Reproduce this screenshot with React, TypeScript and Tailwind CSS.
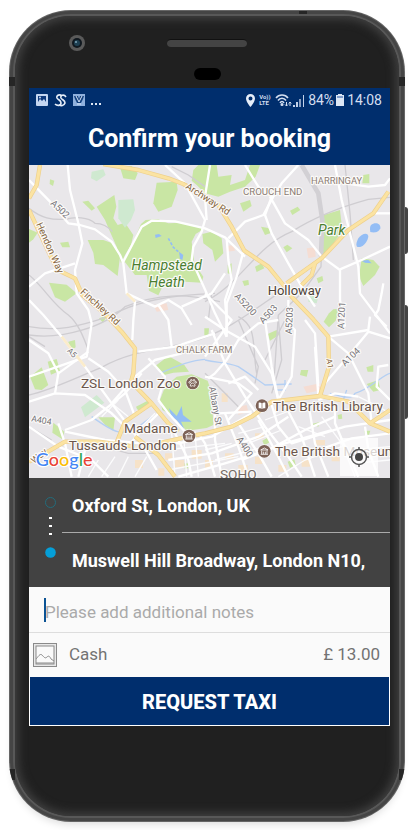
import React from 'react';

const parks = [
  'M285 22L320 18L338 40L330 60L295 55Z',
  'M75 58L88 62L84 78L74 72Z',
  'M395 68L455 65L458 90L440 140L400 155L385 130Z',
  'M505 30L520 15L575 15L580 50L620 45L615 75L660 60L675 15L705 15L692 50L660 80L615 95L580 110L540 100L515 75L500 62Z',
  'M172 125L190 122L210 145L200 152Z',
  'M215 140L268 105L274 140L265 175L278 195L300 188L325 225L318 255L300 285L288 310L275 260L255 215L240 180Z',
  'M348 192L362 180L400 178L430 190L470 188L515 198L540 205L512 222L500 245L508 310L535 350L530 368L480 365L440 365L410 385L400 406L372 392L365 345L330 345L295 300L318 260Z',
  'M188 240L235 240L262 250L285 290L278 348L235 315L210 312L205 278Z',
  'M12 207L38 218L25 238L12 248Z',
  'M105 248L130 245L135 262L112 262Z',
  'M72 368L125 374L155 400L120 425L90 412Z',
  'M532 222L560 215L590 235L595 280L570 305L562 270L535 250Z',
  'M645 130L675 120L680 138L655 155Z',
  'M795 152L818 140L826 150L802 165Z',
  'M708 200L730 204L740 218L720 225Z',
  'M775 262L787 254L802 265L785 277Z',
  'M1015 45L1033 42L1033 70L1012 70Z',
  'M896 165L945 150L952 212L905 280L886 288Z',
  'M1010 295L1045 300L1064 320L1050 345L1015 378L1002 350Z',
  'M690 320L710 310L718 325L695 336Z',
  'M608 316L620 310L620 345L608 340Z',
  'M652 363L670 360L672 374L658 378Z',
  'M875 355L892 348L895 362L880 370Z',
  'M912 460L925 448L942 446L932 482L912 502L896 485Z',
  'M15 650L50 622L70 675L50 690L30 688Z',
  'M68 605L95 597L105 632L78 644Z',
  'M130 545L150 540L152 562L135 573Z',
  'M222 475L248 466L234 488Z',
  'M388 620L430 588L478 615L492 635L445 638L418 645Z',
  'M405 720L420 680L455 650L500 643L548 662L560 700L565 795L545 804L485 812L440 765L412 750Z',
  'M333 740L372 720L384 732L340 755Z',
  'M220 772L270 772L265 812L240 794Z',
  'M85 788L118 815L112 838L82 818Z',
  'M538 505L552 505L550 530L538 526Z',
  'M728 522L755 510L762 525L735 542Z',
  'M828 630L850 630L845 650L825 645Z',
  'M1024 622L1045 615L1045 635L1028 635Z',
  'M1025 672L1060 660L1066 690L1045 695Z',
  'M712 842L730 832L737 845L718 856Z',
  'M788 905L808 898L812 915L795 924Z',
  'M938 765L950 762L952 776L940 778Z',
  'M1018 812L1036 812L1032 824L1020 824Z',
  'M860 792L885 786L880 800Z',
  'M478 910L490 910L490 925L478 925Z',
];

const mintParks = [
  'M200 35L235 28L242 45L215 64L198 55Z',
  'M280 120L325 118L330 150L318 180L300 203L280 175Z',
  'M168 742L215 705L238 728L180 772Z',
  'M850 405L880 410L875 430L850 425Z',
];

const pinkAreas = [
  'M385 435L425 430L430 450L395 455Z',
  'M605 258L625 255L630 272L605 275Z',
  'M845 265L870 262L872 290L850 295Z',
  'M835 680L885 670L890 690L845 700Z',
  'M640 740L665 735L670 755L640 765Z',
];

const railways = [
  'M12 145C50 175 80 180 120 178C150 170 190 170 210 190C235 190 250 200 262 215',
  'M12 345C60 385 80 430 130 465C160 490 175 530 190 570',
  'M12 500C100 515 160 500 250 470C330 425 430 405 570 400',
  'M12 525C110 540 240 500 300 440C400 400 480 400 585 425',
  'M12 705C80 690 160 650 230 622C320 570 430 565 500 545C600 520 700 440 760 400',
  'M540 425C650 370 690 260 800 215C870 170 950 140 1030 118L1095 112',
  'M830 15L880 100L892 180L888 320L830 400L760 465L745 690',
  'M640 480L700 620L690 670M695 640C680 560 700 500 640 470',
  'M560 400L550 480M760 475L770 600L740 700',
  'M12 800L80 840M780 480L720 600M60 560L12 530',
  'M960 15L975 160L985 300M200 850L310 880L400 880',
  'M540 640L600 700L640 740M440 20L490 45L540 80',
];

const streets = [
  'M12 60L75 125L130 190L165 195L210 208L260 245L285 285L295 310L305 400L330 425L325 480L322 540',
  'M128 15L135 90L160 190L172 250L150 330L155 400L190 450L200 490L185 590L12 650',
  'M12 380L60 340L150 310',
  'M12 420L55 465L110 530L180 620L260 730L350 850L395 930',
  'M295 305L350 200L380 182L450 184L540 205L600 232L660 290',
  'M420 15L480 70L540 180L530 215L505 260L500 300L545 400L570 460L605 530',
  'M305 400L390 440L430 420L470 445L500 495',
  'M400 435L430 480L440 560',
  'M470 440L560 400L600 340',
  'M555 15L540 110L545 180',
  'M660 15L700 80L740 110L720 165L740 220L790 310L830 380L870 440',
  'M820 15L770 70L745 110L715 165L660 185L610 235',
  'M735 110L780 190L850 240L890 290L945 330L945 420L960 500',
  'M930 15L950 120L975 220L990 280L1000 320L1005 400L1050 460L1095 520',
  'M945 328L1010 300L1095 260',
  'M960 70L1030 80L1080 75L1095 55',
  'M1040 160L1095 160',
  'M1075 370L1070 400L1060 450L1050 465L1085 500',
  'M605 235L610 300L620 360L600 420L605 480L605 520',
  'M655 275L635 350L605 430L605 530',
  'M540 400L590 450L620 480L540 590',
  'M760 480L700 490L640 540L605 600L570 640L550 655',
  'M560 510L600 610L660 710L720 800L790 890L830 950',
  'M540 470L600 510L690 560L740 640L760 720',
  'M780 480L810 510L800 650L760 720L750 760',
  'M790 420L790 470M720 480L740 620L760 720',
  'M840 480L870 520L880 680M870 560L880 710',
  'M910 530L970 580L1030 700L1040 790',
  'M910 530L1030 510L1035 470',
  'M1095 535L1030 515L960 600L900 670',
  'M1090 615L1060 620L1055 680L1095 720',
  'M740 735L760 800L800 850L960 800L1095 780',
  'M12 540L70 580L100 640L90 700',
  'M12 725L90 700L180 705L260 760L300 800',
  'M100 640L190 575',
  'M260 730L330 650L390 600L470 580',
  'M120 810L200 780L300 700L350 640',
  'M190 595L250 635L300 690L330 770',
  'M340 575L450 560L570 520',
  'M370 595L420 650L400 720M400 720L430 760L480 815',
  'M100 790L120 850L140 950',
  'M12 800L100 860L200 900L250 950',
  'M120 815L240 840L350 850L420 855',
  'M160 950L180 870L230 840',
  'M300 870L350 810L400 760',
  'M520 820L540 850L570 950',
  'M450 820L490 900L500 950',
  'M400 840L460 850L560 830L680 760',
  'M430 900L560 880L700 830L790 770',
  'M460 950L600 910L730 870L840 810L930 770',
  'M570 750L570 840L590 950',
  'M600 760L640 860L670 950',
  'M640 790L700 880L740 950',
  'M700 780L760 890L790 950',
  'M780 735L830 830L870 950',
  'M650 900L780 850L920 810',
  'M850 730L870 850L910 950',
  'M930 740L930 790L960 860L1000 950',
  'M1020 800L1030 870L1060 950',
  'M880 870L980 835L1095 820',
  'M880 720L930 700L1000 710',
  'M540 650L640 670L680 700L610 780',
  'M610 670L660 650L700 690',
  'M560 680L580 760L680 755',
];

const minorStreets = [
  'M440 820L450 950M475 815L485 950M510 815L520 950M420 870L600 850M430 930L640 890',
  'M540 870L620 850M570 900L700 865M640 820L720 800M670 850L770 810M720 780L800 750',
  'M760 950L840 900L950 860M820 800L900 830M890 770L950 850L990 950',
  'M190 950L220 900M230 950L270 890M280 950L310 890M330 950L365 890',
  'M260 730L310 770M230 770L280 720M290 800L340 750M330 820L390 760',
  'M1000 710L1060 740L1095 760M980 870L1095 860M990 910L1095 900',
];

const mainRoads = [
  'M45 15L35 75L12 115',
  'M12 150L40 210L75 285L98 330L150 355L172 405L240 462L290 515L330 565L325 640L318 665L380 730L430 790L460 815',
  'M235 12L340 30L430 55L475 72L540 108L580 135L620 200L658 272L730 320L775 375L800 410L865 478L910 530L912 620L885 708',
  'M1090 95L1045 160L970 210L890 295L785 370',
  'M870 310L860 345L830 375',
  'M12 905L60 880L120 845L220 845L330 860',
  'M330 830L400 885L450 950',
  'M380 730L300 785L270 860',
  'M400 850L490 830L540 820L620 800L680 770L740 725L885 708L970 725L1035 790L1095 815',
  'M1035 790L1050 780L1095 750',
];

const water = [
  'M1000 235C1010 220 1030 215 1030 230C1025 255 1005 265 996 260C992 255 995 245 1000 235Z',
  'M1038 195C1050 185 1068 190 1066 205C1060 220 1045 218 1036 216C1034 205 1035 200 1038 195Z',
  'M462 275L475 285L472 300L465 296Z',
  'M390 224L402 222L410 228L392 234Z',
  'M1010 302L1030 300L1040 310L1020 308Z',
  'M432 745L455 768L470 738L474 765L500 785L468 785L478 808L455 780L440 772Z',
];

const canals = [
  'M540 600C580 610 600 605 640 620C670 640 700 660 720 675L800 672',
  'M915 700C950 710 980 720 990 700C1030 690 1080 640 1095 640',
  'M200 770C270 820 290 830 340 800L380 770M405 640C470 610 510 600 540 598',
  'M750 690L780 690L780 660M955 720L965 690',
];

const buildings = [
  'M420 880h22v20h-22zM450 900h28v22h-28zM500 870h30v26h-30zM540 900h24v24h-24zM600 880h26v18h-26z',
  'M640 915h28v20h-28zM690 890h22v22h-22zM760 915h24v20h-24zM400 925h18v22h-18zM830 900h28v20h-28z',
  'M870 840h30v16h-30zM920 880h24v24h-24zM590 700h18v26h-18zM690 820h26v16h-26zM330 900h24v24h-24z',
];

type LabelProps = {
  x: number;
  y: number;
  size: number;
  fill: string;
  children: string;
  angle?: number;
  italic?: boolean;
  anchor?: 'start' | 'middle' | 'end';
};

function Label({ x, y, size, fill, children, angle = 0, italic, anchor = 'start' }: LabelProps) {
  return (
    <text
      x={x}
      y={y}
      fontSize={size}
      fill={fill}
      stroke="#fbfaf8"
      strokeWidth={7}
      strokeLinejoin="round"
      paintOrder="stroke"
      textAnchor={anchor}
      fontStyle={italic ? 'italic' : 'normal'}
      transform={angle ? `rotate(${angle} ${x} ${y})` : undefined}
    >
      {children}
    </text>
  );
}

function Marker({ x, y, children }: { x: number; y: number; children: React.ReactNode }) {
  return (
    <g transform={`translate(${x} ${y})`}>
      <circle r="21" fill="#fff" opacity="0.8" />
      <circle r="19" fill="#7d6257" />
      {children}
    </g>
  );
}

function Museum() {
  return (
    <g fill="none" stroke="#fff" strokeWidth="2.5">
      <path d="M-11 -4L0 -10L11 -4Z" />
      <path d="M-11 9H11M-8 -2V8M8 -2V8M-3 1V8M3 1V8" />
    </g>
  );
}

function CityMap() {
  const poi = '#6b564c';
  const road = '#77747a';
  const brown = '#85643c';
  return (
    <svg
      viewBox="12 15 1083 939"
      preserveAspectRatio="xMidYMid slice"
      className="block w-full font-[Roboto,sans-serif]"
      role="img"
      aria-label="Map of north London"
    >
      <rect x="0" y="0" width="1110" height="970" fill="#e9e7ea" />
      <g fill="#c9e6a4">{parks.map((d) => <path key={d} d={d} />)}</g>
      <g fill="#cfe9d0">{mintParks.map((d) => <path key={d} d={d} />)}</g>
      <g fill="#f5ddd3">{pinkAreas.map((d) => <path key={d} d={d} />)}</g>
      <g fill="#f6e2c8">{buildings.map((d) => <path key={d} d={d} />)}</g>
      <g fill="none" stroke="#cfcdd1" strokeWidth="4">{railways.map((d) => <path key={d} d={d} />)}</g>
      <path d="M830 15L880 100L892 180L888 290" fill="none" stroke="#d2d0d4" strokeWidth="14" />
      <g fill="#93bdf5">{water.map((d) => <path key={d} d={d} />)}</g>
      <path d="M430 235L445 262L460 275" fill="none" stroke="#93bdf5" strokeWidth="5" strokeDasharray="9 5" />
      <g fill="none" stroke="#b4cff3" strokeWidth="4">{canals.map((d) => <path key={d} d={d} />)}</g>
      <g fill="none" stroke="#fcfcfd" strokeWidth="4">{minorStreets.map((d) => <path key={d} d={d} />)}</g>
      <g fill="none" stroke="#fff" strokeWidth="7" strokeLinejoin="round">{streets.map((d) => <path key={d} d={d} />)}</g>
      <path d="M110 530L180 620M305 400L330 425" fill="none" stroke="#fbeccb" strokeWidth="8" />
      <g fill="none" stroke="#eed08c" strokeWidth="13" strokeLinejoin="round">{mainRoads.map((d) => <path key={d} d={d} />)}</g>
      <g fill="none" stroke="#fbe3a2" strokeWidth="9" strokeLinejoin="round">{mainRoads.map((d) => <path key={d} d={d} />)}</g>

      <Label x={75} y={132} size={28} fill={road} angle={43}>A502</Label>
      <Label x={33} y={193} size={29} fill={brown} angle={66}>Hendon Way</Label>
      <Label x={164} y={398} size={29} fill={brown} angle={42}>Finchley Rd</Label>
      <Label x={480} y={84} size={29} fill={brown} angle={33}>Archway Rd</Label>
      <Label x={627} y={410} size={28} fill={road} angle={47}>A5200</Label>
      <Label x={715} y={493} size={28} fill={road} angle={-48}>A503</Label>
      <Label x={800} y={523} size={28} fill={road} angle={-87}>A5203</Label>
      <Label x={957} y={507} size={28} fill={road} angle={-87}>A1201</Label>
      <Label x={960} y={620} size={28} fill={road} angle={-44}>A104</Label>
      <Label x={904} y={598} size={24} fill={brown} angle={80}>A1</Label>
      <Label x={18} y={784} size={26} fill={road} angle={10}>A404</Label>
      <Label x={634} y={838} size={28} fill={road} angle={57}>A400</Label>
      <Label x={552} y={682} size={28} fill={road} angle={80}>Albany St</Label>
      <Label x={125} y={574} size={24} fill={road} angle={45}>A5</Label>
      <Label x={28} y={912} size={28} fill={brown} angle={-40}>Way</Label>

      <Label x={743} y={106} size={29} fill="#8c7c74" anchor="middle">CROUCH END</Label>
      <Label x={935} y={72} size={28} fill="#8c7c74" anchor="middle">HARRINGAY</Label>
      <Label x={453} y={579} size={28} fill="#8c7c74">CHALK FARM</Label>
      <Label x={640} y={957} size={41} fill="#756a64" anchor="middle">SOHO</Label>
      <Label x={425} y={331} size={42} fill="#4a7f30" anchor="middle" italic>Hampstead</Label>
      <Label x={425} y={380} size={42} fill="#4a7f30" anchor="middle" italic>Heath</Label>
      <Label x={920} y={224} size={42} fill="#4a7f30" anchor="middle" italic>Park</Label>
      <Label x={808} y={405} size={39} fill="#4d4239" anchor="middle">Holloway</Label>
      <Label x={467} y={684} size={41} fill={poi} anchor="end">ZSL London Zoo</Label>
      <Label x={458} y={820} size={41} fill={poi} anchor="end">Madame</Label>
      <Label x={455} y={869} size={41} fill={poi} anchor="end">Tussauds London</Label>
      <Label x={744} y={753} size={41} fill={poi}>The British Library</Label>
      <Label x={750} y={889} size={41} fill={poi}>The British Museum</Label>

      <Marker x={503} y={669}>
        <g fill="none" stroke="#fff" strokeWidth="2.5">
          <path d="M-7 9C-8 4 -3 0 0 0S8 4 7 9C4 11 2 8 0 8S-4 11 -7 9Z" />
          <circle cx="-9" cy="-2" r="2.5" />
          <circle cx="-4" cy="-8" r="2.5" />
          <circle cx="4" cy="-8" r="2.5" />
          <circle cx="9" cy="-2" r="2.5" />
        </g>
      </Marker>
      <Marker x={492} y={828}><Museum /></Marker>
      <Marker x={711} y={737}>
        <path d="M-10 -9C-6 -11 -3 -9 -1 -7V10C-4 8 -7 8 -10 8ZM10 -9C6 -11 3 -9 1 -7V10C4 8 7 8 10 8Z" fill="#fff" />
      </Marker>
      <Marker x={718} y={874}><Museum /></Marker>

      <text
        x="32"
        y="917"
        fontSize="54"
        className="font-[Lato,sans-serif] font-medium"
        stroke="#fff"
        strokeWidth="7"
        strokeLinejoin="round"
        paintOrder="stroke"
      >
        <tspan fill="#4285f4">G</tspan>
        <tspan fill="#ea4335">o</tspan>
        <tspan fill="#fbbc05">o</tspan>
        <tspan fill="#4285f4">g</tspan>
        <tspan fill="#34a853">l</tspan>
        <tspan fill="#ea4335">e</tspan>
      </text>
    </svg>
  );
}

function StatusBar() {
  return (
    <div className="flex h-6 items-center justify-between pl-[7px] pr-2 text-sm text-[#d3def0]">
      <div className="flex items-center gap-[6px]">
        <svg viewBox="0 0 12 12" className="h-3 w-3" aria-hidden="true">
          <rect width="12" height="12" rx="1" fill="#c3d5f0" />
          <path d="M2 2H10V8L8 5L6 7L4 5L2 8Z" fill="#0d397c" />
          <circle cx="4" cy="3.500" r="1" fill="#c3d5f0" />
        </svg>
        <svg viewBox="0 0 13 13" className="h-[13px] w-[13px]" fill="none" aria-hidden="true">
          <path d="M8 2C6 0 2 1 3 4C4 6 7 6 7 9C7 12 3 12 1 10" stroke="#e6eef9" strokeWidth="1.6" />
          <path d="M12 3C10 0 6 1 7 4C8 6 11 6 11 9C10 12 7 12 5 11" stroke="#e6eef9" strokeWidth="1.6" />
        </svg>
        <svg viewBox="0 0 12 12" className="h-3 w-3" aria-hidden="true">
          <rect width="12" height="12" fill="#8fb0dd" />
          <path d="M1 2H5L6 5L7 2H11L10 5L8 9H4L2 5Z" fill="#12407f" />
          <path d="M3 2L6 8L9 2M4 10H8" stroke="#d8e5f7" fill="none" />
        </svg>
        <svg viewBox="0 0 12 12" className="h-3 w-3" fill="#dde7f5" aria-hidden="true">
          <rect x="0" y="9" width="2" height="2" />
          <rect x="4" y="9" width="2" height="2" />
          <rect x="8" y="9" width="2" height="2" />
        </svg>
      </div>
      <div className="flex items-center">
        <svg viewBox="0 0 9 13" className="mr-1 h-[13px] w-[9px]" fill="#e6eef9" aria-hidden="true">
          <path fillRule="evenodd" d="M4.500 0A4.500 4.500 0 0 0 0 4.500C0 8 4.500 13 4.500 13S9 8 9 4.500A4.500 4.500 0 0 0 4.500 0ZM4.500 2.500A2 2 0 1 1 4.500 6.500A2 2 0 0 1 4.500 2.500Z" />
        </svg>
        <span className="mr-1 flex w-3 flex-col text-[6px] font-bold leading-[6px]">
          <span>Vo))</span>
          <span>LTE</span>
        </span>
        <svg viewBox="0 0 17 13" className="h-[13px] w-[17px]" fill="none" stroke="#d3def0" strokeWidth="1.500" aria-hidden="true">
          <path d="M1 4C4 0 10 0 13 4M3 6.500C5 3.500 9 3.500 11 6.500M5 9C6 7 8 7 9 9" />
          <circle cx="7" cy="10.500" r="0.800" fill="#d3def0" />
          <path d="M11.500 8V12M10 10.500L11.500 12L13 10.500M15 12V8M13.700 9.500L15 8L16.300 9.500" strokeWidth="1" />
        </svg>
        <svg viewBox="0 0 13 13" className="mr-[3px] h-[13px] w-[13px]" fill="#c3d2ea" aria-hidden="true">
          <rect x="1" y="11" width="2" height="2" />
          <rect x="4" y="8" width="2" height="5" />
          <rect x="7" y="5" width="2" height="8" opacity="0.7" />
          <rect x="11" y="1" width="1" height="12" />
        </svg>
        <span>84%</span>
        <svg viewBox="0 0 8 12" className="ml-[2px] mr-[3px] h-3 w-2" fill="#dde7f5" aria-hidden="true">
          <path d="M2 0H6V1H8V12H0V1H2Z" />
          <path d="M1 2H7V4H1Z" fill="#7f9cca" />
        </svg>
        <span>14:08</span>
      </div>
    </div>
  );
}

function Phone({ children }: { children: React.ReactNode }) {
  return (
    <div className="relative mx-auto w-full max-w-[480px] rounded-[62px] bg-[#666] p-px shadow-[0_6px_8px_-4px_rgba(0,0,0,0.15)]">
      <span className="absolute -right-[3px] top-[197px] h-[47px] w-[3px] rounded-r-sm bg-[#444]" />
      <span className="absolute -right-[3px] top-[295px] h-[114px] w-[3px] rounded-r-sm bg-[#444]" />
      <div className="rounded-[61px] bg-[#454545] p-[3px]">
        <div className="rounded-[58px] bg-[#585858] p-[2px]">
          <div className="rounded-[56px] bg-[#202020] pb-[90px] pl-[14px] pr-[9px] shadow-[inset_0_0_10px_3px_#424242]">
            <div className="relative h-[72px]">
              <svg viewBox="0 0 16 16" className="absolute left-10 top-[19px] h-4 w-4" aria-hidden="true">
                <circle cx="8" cy="8" r="8" fill="#5a5a5a" />
                <circle cx="8" cy="8" r="5" fill="#10181f" />
                <circle cx="8" cy="8" r="3" fill="#1d3f52" />
                <circle cx="7" cy="7" r="1" fill="#7fa6b8" />
              </svg>
              <div className="flex flex-col items-center pr-[5px] pt-[23px]">
                <div className="h-2 w-20 rounded-full border-t border-[#111] bg-[#444]" />
                <div className="mt-[21px] h-3 w-[27px] rounded-full bg-black" />
              </div>
            </div>
            {children}
          </div>
        </div>
      </div>
      <div className="pointer-events-none absolute inset-0 overflow-hidden rounded-[62px]" aria-hidden="true">
        <span className="absolute left-0 top-[67px] h-[9px] w-[6px] bg-[#262626]" />
        <span className="absolute right-0 top-[67px] h-[9px] w-[6px] bg-[#262626]" />
        <span className="absolute bottom-[42px] left-0 h-[11px] w-[6px] bg-[#262626]" />
        <span className="absolute bottom-[42px] right-0 h-[11px] w-[6px] bg-[#262626]" />
        <span className="absolute right-[98px] top-px h-[3px] w-2 bg-[#262626]" />
      </div>
    </div>
  );
}

export default function App() {
  return (
    <div className="bg-white px-[9px] pb-2 pt-[10px] font-[Roboto,sans-serif]">
      <Phone>
        <main className="bg-[#fafafa]">
          <header className="bg-[#002e6d] pb-[7px]">
            <StatusBar />
            <h1 className="pt-[7px] text-center text-[25px] font-bold leading-[39px] text-white">
              Confirm your booking
            </h1>
          </header>

          <div className="relative overflow-hidden">
            <CityMap />
            <button
              type="button"
              aria-label="Centre on my location"
              className="absolute bottom-[2px] right-3 flex h-[38px] w-[38px] items-center justify-center bg-white/75"
            >
              <svg viewBox="0 0 20 20" className="h-5 w-5" fill="none" stroke="#555" strokeWidth="1.500" aria-hidden="true">
                <circle cx="10" cy="10" r="7.500" />
                <circle cx="10" cy="10" r="4" fill="#444" stroke="none" />
                <path d="M10 0V3M10 17V20M0 10H3M17 10H20" />
              </svg>
            </button>
          </div>

          <section className="flex bg-[#424242] text-lg font-bold text-white">
            <svg viewBox="0 0 33 109" className="h-[109px] w-[33px] shrink-0" aria-hidden="true">
              <circle cx="21.500" cy="24.500" r="5" fill="none" stroke="#236c7c" />
              <g fill="#fff">
                <rect x="20" y="39" width="3" height="2" />
                <rect x="20" y="47" width="3" height="2" />
                <rect x="20" y="55" width="3" height="2" />
              </g>
              <circle cx="21.500" cy="74.500" r="5.300" fill="#059fd8" />
            </svg>
            <div className="min-w-0 flex-1">
              <p className="h-[55px] truncate border-b border-[#aaa] pl-[10px] leading-[56px]">Oxford St, London, UK</p>
              <p className="h-[54px] truncate pl-[10px] leading-[56px]">Muswell Hill Broadway, London N10,</p>
            </div>
          </section>

          <div className="flex h-[46px] items-center border-b border-[#ddd] pl-[15px]">
            <span className="h-6 w-[2px] shrink-0 bg-[#0b5394]" />
            <label htmlFor="notes" className="sr-only">Additional notes</label>
            <input
              id="notes"
              type="text"
              placeholder="Please add additional notes"
              className="-ml-px h-10 min-w-0 flex-1 bg-transparent pt-[5px] text-[17px] text-[#444] outline-none placeholder:text-[#aaa]"
            />
          </div>

          <div className="flex h-11 items-center pl-1 pr-[10px] text-[17px] text-[#737373]">
            <svg viewBox="0 0 24 24" className="h-6 w-6" fill="none" stroke="#8a8a8a" aria-hidden="true">
              <rect x="0.500" y="0.500" width="23" height="23" fill="#e8e8e8" />
              <rect x="3" y="3" width="18" height="18" fill="#fafafa" />
              <path d="M3 16C5 14 7 10 9 12S12 16 14 14S17 14 18 16L21 18M3 20H21" />
            </svg>
            <span className="ml-3">Cash</span>
            <span className="ml-auto">£ 13.00</span>
          </div>

          <button
            type="button"
            className="block h-[49px] w-full border-x border-b border-white bg-[#002e6d] pt-[2px] text-xl font-extrabold text-white"
          >
            REQUEST TAXI
          </button>
        </main>
      </Phone>
    </div>
  );
}
